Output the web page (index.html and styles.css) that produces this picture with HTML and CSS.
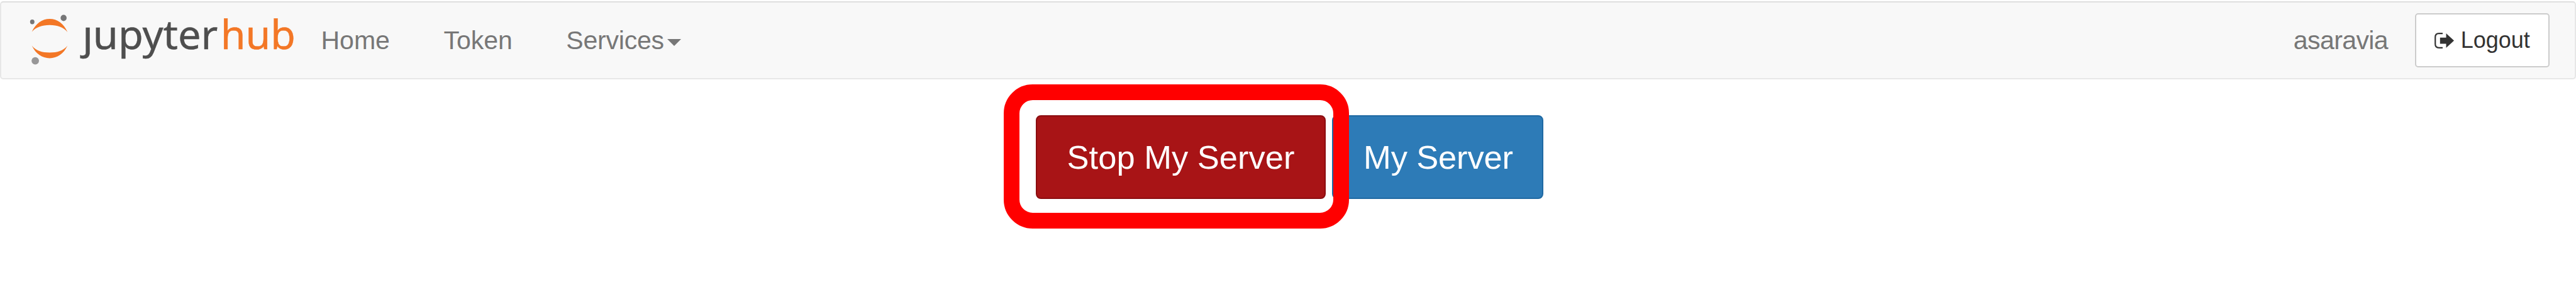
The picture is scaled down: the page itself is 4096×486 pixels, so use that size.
FILE: index.html
```html
<!DOCTYPE html>
<html lang="en">
<head>
<meta charset="utf-8">
<title>JupyterHub</title>
<link rel="stylesheet" href="styles.css">
</head>
<body>
<nav class="navbar">
  <svg class="logo" viewBox="40.500 4 470 130" role="img" aria-label="jupyterhub">
    <path class="hub" d="M53.300 54.500C60 40 71 32.300 84 32.300S108 40 114.700 55C108 46.500 97 42.700 84 42.700S60 46.500 53.300 54.500Z"/>
    <path class="hub" d="M53.300 78.300C60 87 71 90.200 84 90.200S108 87 114.700 78.300C108 92.500 97 99.800 84 99.800S60 92.500 53.300 78.300Z"/>
    <ellipse cx="54" cy="37.300" rx="3.800" ry="4" fill="#767677"/>
    <ellipse cx="108" cy="30.600" rx="5.200" ry="5.400" fill="#767677"/>
    <circle cx="59.200" cy="104.300" r="6.400" fill="#989798"/>
    <text class="word dark" x="140.500" y="84" textLength="233" lengthAdjust="spacingAndGlyphs">ȷupyter</text>
    <text class="word hub" x="378.500" y="84" textLength="129" lengthAdjust="spacingAndGlyphs">hub</text>
  </svg>
  <ul class="links">
    <li>Home</li>
    <li>Token</li>
    <li class="dropdown">Services<span class="caret"></span></li>
  </ul>
  <div class="account">
    <span class="user">asaravia</span>
    <button class="logout"><svg class="icon" viewBox="0 0 34 27"><path d="M14 1.300H7.500Q1.300 1.300 1.300 7.500V19.500Q1.300 25.700 7.500 25.700H14" fill="none" stroke="#333" stroke-width="2.400"/><path d="M9.500 8.500H20V1L33.500 13.500L20 26V19H9.500Z" fill="#333"/></svg>Logout</button>
  </div>
</nav>
<main class="actions">
  <div class="stop-wrap"><button class="btn stop">Stop My Server</button><span class="highlight"></span></div>
  <button class="btn primary">My Server</button>
</main>
</body>
</html>
```
FILE: styles.css
```css
* { box-sizing: border-box; }
body {
  margin: 0;
  padding-top: 2px;
  height: 486px;
  background: #fff;
  font-family: "Liberation Sans", Arial, sans-serif;
}
button { font-family: inherit; margin: 0; white-space: nowrap; }
.navbar {
  display: flex;
  align-items: center;
  height: 124px;
  padding: 0 40px 0 35px;
  border: 2px solid #e7e7e7;
  border-top-color: #dfdfdf;
  border-radius: 5px;
  background: #f8f8f8;
  color: #777;
  font-size: 41px;
}
.logo { width: 437.500px; height: 120px; flex: none; }
.word { font-family: "Noto Sans", sans-serif; font-size: 68.500px; stroke-width: 0.500px; }
.dark { fill: #4e4e4e; stroke: #4e4e4e; }
.hub { fill: #f37726; }
.word.hub { stroke: #f37726; }
.links {
  display: flex;
  gap: 85.500px;
  margin: 0 0 0 36px;
  padding: 0;
  list-style: none;
  line-height: 47px;
}
.dropdown { display: flex; align-items: center; letter-spacing: -0.200px; }
.caret {
  margin: 6px 0 0 5px;
  border: 11px solid transparent;
  border-top: 11px solid #777;
  border-bottom: 0;
}
.account { display: flex; align-items: center; gap: 43px; margin-left: auto; }
.user { letter-spacing: -0.600px; }
.logout {
  display: flex;
  align-items: center;
  justify-content: center;
  gap: 10px;
  width: 214px;
  height: 86px;
  padding: 0;
  border: 2px solid #ccc;
  border-radius: 5px;
  background: #fff;
  color: #333;
  font-size: 36px;
}
.icon { width: 31.500px; height: 25px; }
.actions {
  display: flex;
  gap: 10px;
  padding: 57px 0 0 1647px;
}
.stop-wrap { position: relative; }
.btn {
  display: block;
  height: 133px;
  padding: 0;
  border: 2px solid;
  border-radius: 8px;
  color: #fff;
  font-size: 52.500px;
}
.stop { width: 461px; background: #a81416; border-color: #8b0d10; }
.primary { width: 336px; padding-left: 2px; background: #2d7bb7; border-color: #1f69a3; letter-spacing: -0.150px; }
.highlight {
  position: absolute;
  left: -51px;
  top: -49px;
  width: 549px;
  height: 229px;
  border: 25px solid #f00;
  border-radius: 46px;
}
```
